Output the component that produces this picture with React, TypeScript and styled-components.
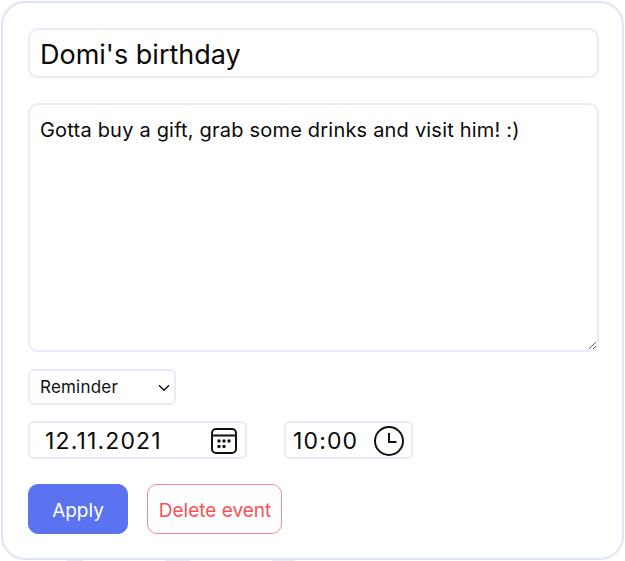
import React from "react";
import styled, { createGlobalStyle } from "styled-components";

const FONT = `"Inter", "Open Sans", sans-serif`;

const Global = createGlobalStyle`
  html, body { margin: 0; padding: 0; background: #fff; height: 561px; overflow: hidden; }
  body { font-family: ${FONT}; color: #000; }
  * { box-sizing: border-box; }
`;

const Card = styled.form`
  width: 623px;
  height: 559px;
  margin: 1px 0 0 1px;
  padding: 25px 24px 24px 25px;
  background: #fff;
  border: 2px solid #dfe3fb;
  border-radius: 24px;
  display: flex;
  flex-direction: column;
`;

const Peek = styled.div`
  display: flex;
  padding-left: 67px;
  gap: 82px;
`;

const PeekMark = styled.span<{ $w: number }>`
  display: block;
  width: ${(p) => p.$w}px;
  height: 1px;
  background: #ececf2;
`;

const TitleInput = styled.input`
  width: 571px;
  height: 50px;
  padding: 3px 10px 0;
  border: 2px solid #e9ebfd;
  border-radius: 10px;
  font: 400 27px ${FONT};
  color: #0a0a0a;
  outline: none;
`;

const Notes = styled.textarea`
  width: 571px;
  height: 249px;
  margin-top: 25px;
  padding: 10px 10px;
  border: 2px solid #e9ebfd;
  border-radius: 10px;
  font: 400 20px/30px ${FONT};
  letter-spacing: 0.2px;
  color: #0a0a0a;
  outline: none;
  resize: vertical;
`;

const SelectWrap = styled.div`
  position: relative;
  width: 148px;
  margin-top: 17px;
`;

const Select = styled.select`
  display: block;
  width: 148px;
  height: 36px;
  padding: 0 10px;
  appearance: none;
  background: #fff;
  border: 2px solid #e9ebfd;
  border-radius: 6px;
  font: 400 17px ${FONT};
  letter-spacing: 0.2px;
  color: #111;
  outline: none;
`;

const Chevron = styled.svg`
  position: absolute;
  top: 15px;
  right: 6px;
  pointer-events: none;
`;

const DateRow = styled.div`
  display: flex;
  gap: 37px;
  margin-top: 16px;
`;

const Field = styled.label<{ $w: number; $pad: number; $right: number }>`
  display: flex;
  align-items: center;
  justify-content: space-between;
  width: ${(p) => p.$w}px;
  height: 38px;
  padding: 2px ${(p) => p.$right}px 0 ${(p) => p.$pad}px;
  border: 2px solid #e9ebfd;
  border-radius: 6px;
`;

const FieldInput = styled.input<{ $w: number }>`
  width: ${(p) => p.$w}px;
  padding: 0;
  border: none;
  outline: none;
  font: 400 23px ${FONT};
  letter-spacing: 1.15px;
  color: #0a0a0a;
`;

const Actions = styled.div`
  display: flex;
  gap: 19px;
  margin-top: 25px;
`;

const Apply = styled.button`
  width: 100px;
  height: 50px;
  padding: 3px 0 0;
  background: #5b73f0;
  border: 1.5px solid #5b73f0;
  border-radius: 10px;
  color: #fff;
  font: 400 19px ${FONT};
`;

const Delete = styled.button`
  width: 135px;
  height: 50px;
  padding: 3px 0 0 1px;
  background: #fff;
  border: 1.5px solid #fb8a90;
  border-radius: 10px;
  color: #fb4f58;
  font: 400 19px ${FONT};
`;

const CalendarIcon = () => (
  <svg width="28" height="28" viewBox="0 0 28 28" fill="none" stroke="#111" strokeWidth="2">
    <rect x="2" y="2" width="24" height="24" rx="4" />
    <path d="M2 8.5h24" />
    <g fill="#111" stroke="none">
      <circle cx="9" cy="14" r="1.7" /><circle cx="14" cy="14" r="1.7" /><circle cx="19" cy="14" r="1.7" />
      <circle cx="9" cy="19.5" r="1.7" /><circle cx="14" cy="19.5" r="1.7" />
    </g>
  </svg>
);

const ClockIcon = () => (
  <svg width="32" height="32" viewBox="0 0 32 32" fill="none" stroke="#111" strokeWidth="2">
    <circle cx="16" cy="16" r="14" />
    <path d="M16 8v9h7.5" />
  </svg>
);

export default function App() {
  return (
    <>
      <Global />
      <Card>
        <TitleInput defaultValue="Domi's birthday" />
        <Notes defaultValue="Gotta buy a gift, grab some drinks and visit him! :)" />
        <SelectWrap>
          <Select defaultValue="Reminder">
            <option>Reminder</option>
          </Select>
          <Chevron width="12" height="8" viewBox="0 0 12 8" fill="none" stroke="#111" strokeWidth="1.4">
            <path d="M1 1.2 6 6.2l5-5" />
          </Chevron>
        </SelectWrap>
        <DateRow>
          <Field $w={219} $pad={15} $right={7}>
            <FieldInput $w={140} defaultValue="12.11.2021" />
            <CalendarIcon />
          </Field>
          <Field $w={129} $pad={7} $right={6}>
            <FieldInput $w={72} defaultValue="10:00" />
            <ClockIcon />
          </Field>
        </DateRow>
        <Actions>
          <Apply type="button">Apply</Apply>
          <Delete type="button">Delete event</Delete>
        </Actions>
      </Card>
      <Peek>
        <PeekMark $w={16} />
        <PeekMark $w={25} />
        <PeekMark $w={23} />
      </Peek>
    </>
  );
}
